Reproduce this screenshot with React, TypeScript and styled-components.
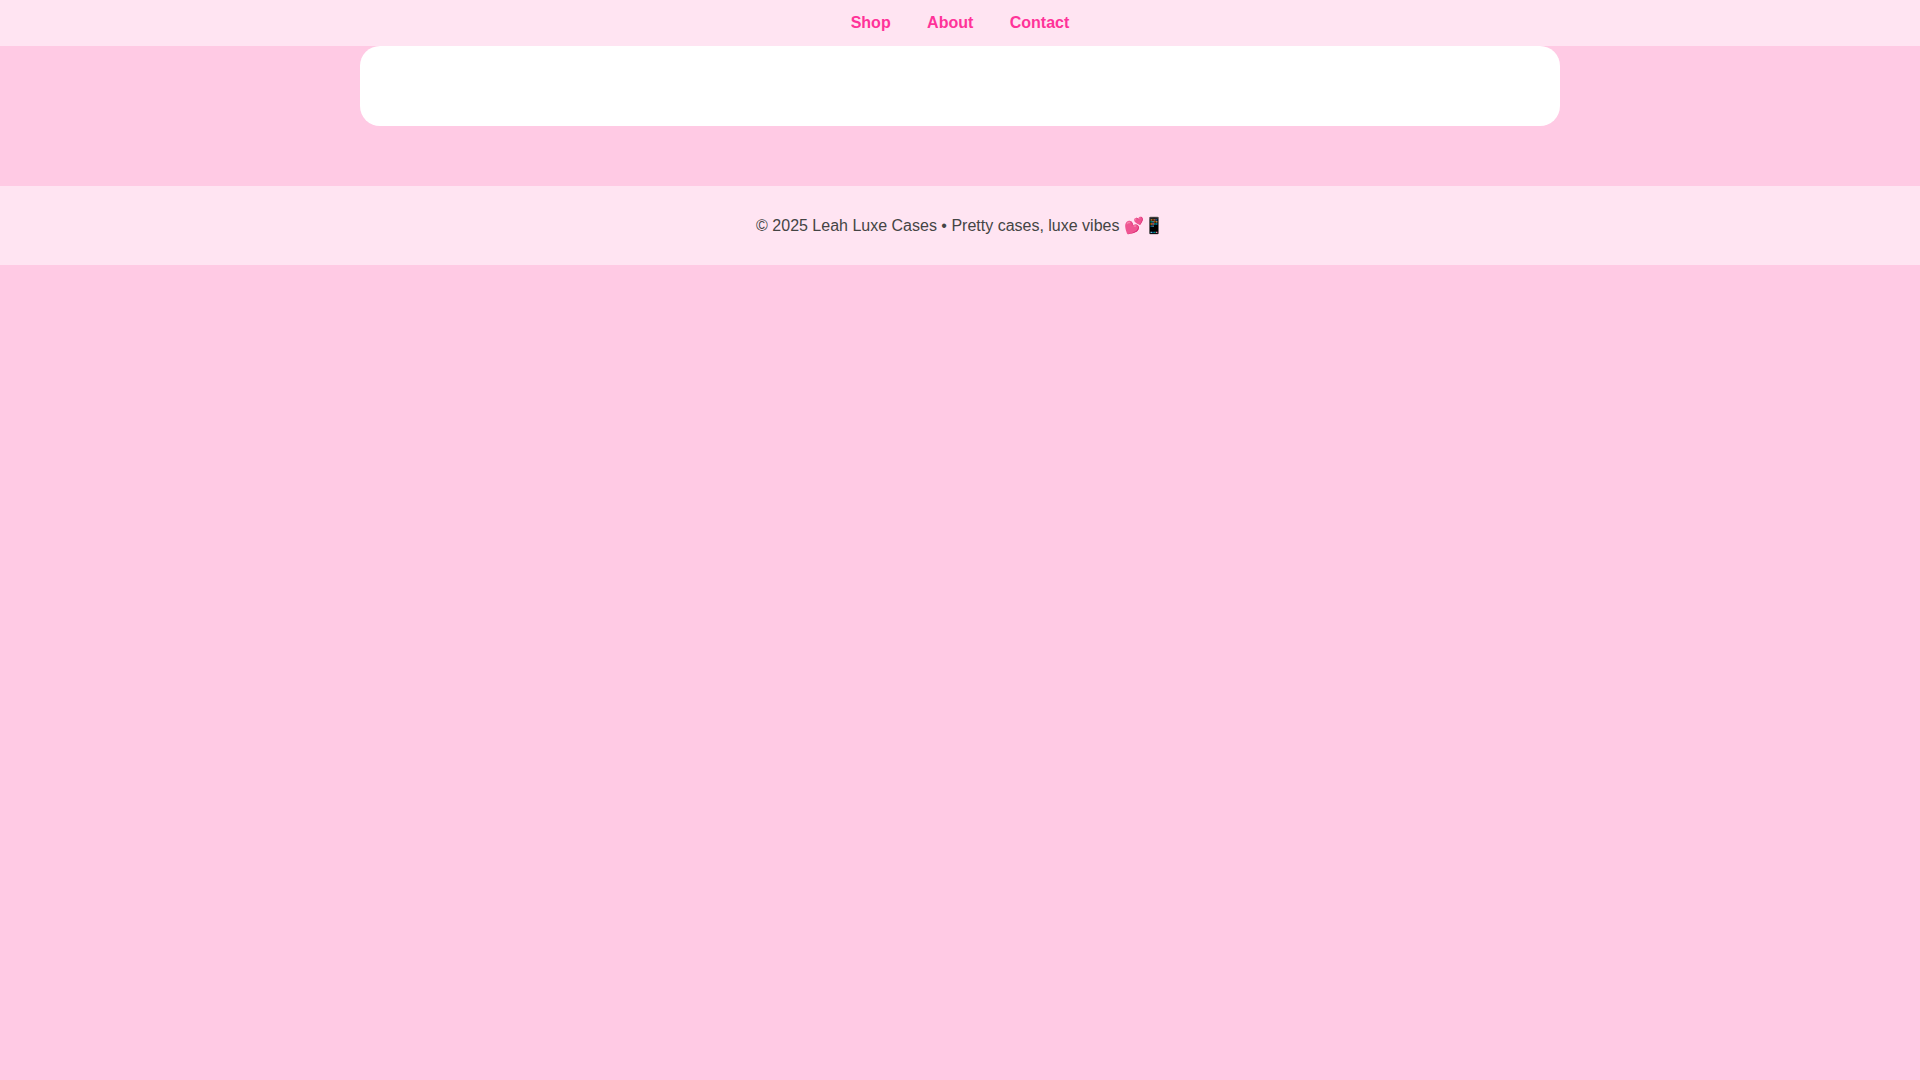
import React from "react";
import styled, { createGlobalStyle } from "styled-components";

const Global = createGlobalStyle`
  html, body { margin: 0; padding: 0; }
  body {
    background: #ffcae4;
    font-family: "Liberation Sans", Arial, sans-serif;
    color: #444;
    min-height: 100vh;
  }
`;

const Nav = styled.nav`
  padding: 14px 0;
  background: #ffe4f2;
  text-align: center;
`;

const NavLink = styled.a`
  margin: 0 16px;
  color: #ff3399;
  font-size: 16px;
  font-weight: 700;
  text-decoration: none;
`;

const Main = styled.main`
  padding: 0 0 60px;
`;

const Card = styled.section`
  width: 1200px;
  height: 80px;
  margin: 0 auto;
  background: #fff;
  border-radius: 20px;
`;

const Footer = styled.footer`
  padding: 30px 0;
  background: #ffe4f2;
  text-align: center;
  font-size: 16px;
  line-height: 19px;
`;

export default function App() {
  return (
    <>
      <Global />
      <Nav>
        <NavLink href="#">Shop</NavLink>{" "}
        <NavLink href="#">About</NavLink>{" "}
        <NavLink href="#">Contact</NavLink>
      </Nav>
      <Main>
        <Card />
      </Main>
      <Footer>© 2025 Leah Luxe Cases • Pretty cases, luxe vibes 💕📱</Footer>
    </>
  );
}
